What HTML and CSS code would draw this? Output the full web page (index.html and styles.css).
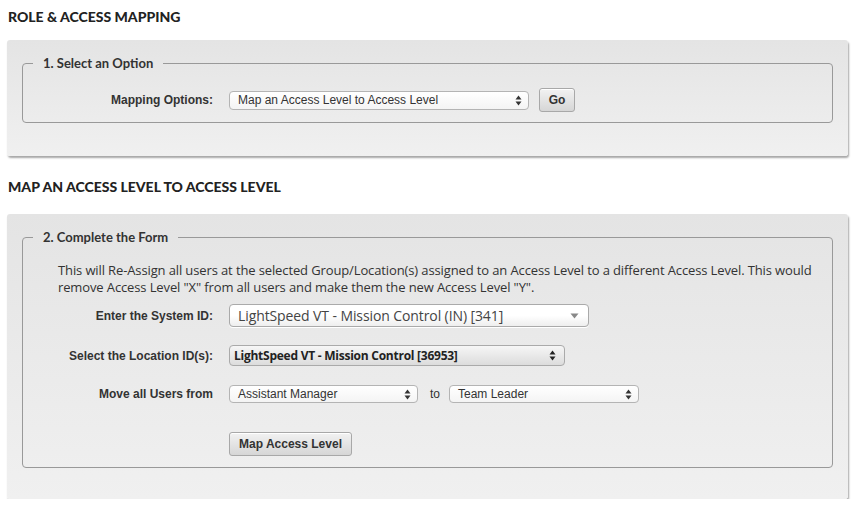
FILE: index.html
```html
<!DOCTYPE html>
<html>
<head>
<meta charset="utf-8">
<link rel="stylesheet" href="styles.css">
</head>
<body>
<div class="page">
  <h2 class="title">ROLE &amp; ACCESS MAPPING</h2>
  <div class="panel panel-1">
    <fieldset class="box box-1">
      <legend>1. Select an Option</legend>
      <div class="inner">
        <div class="row row-map">
          <label class="lbl">Mapping Options:</label>
          <div class="sel sel-map"><span>Map an Access Level to Access Level</span><svg class="updown" width="7" height="11" viewBox="0 0 7 11"><path d="M3.5 0.5L6.5 4.5H0.5Z M3.5 10.5L6.5 6.5H0.5Z" fill="#333"/></svg></div>
          <button class="btn btn-go">Go</button>
        </div>
      </div>
    </fieldset>
  </div>

  <h2 class="title title-2">MAP AN ACCESS LEVEL TO ACCESS LEVEL</h2>
  <div class="panel panel-2">
    <fieldset class="box box-2">
      <legend>2. Complete the Form</legend>
      <div class="inner">
        <p class="desc">This will Re-Assign all users at the selected Group/Location(s) assigned to an Access Level to a different Access Level. This would remove Access Level "X" from all users and make them the new Access Level "Y".</p>
        <div class="row row-sys">
          <label class="lbl">Enter the System ID:</label>
          <div class="sel2"><span>LightSpeed VT - Mission Control (IN) [341]</span><svg class="down" width="9" height="6" viewBox="0 0 9 6"><path d="M0.5 0.5H8.5L4.5 5.5Z" fill="#888"/></svg></div>
        </div>
        <div class="row row-loc">
          <label class="lbl">Select the Location ID(s):</label>
          <div class="sel sel-loc"><span>LightSpeed VT - Mission Control [36953]</span><svg class="updown" width="7" height="11" viewBox="0 0 7 11"><path d="M3.5 0.5L6.5 4.5H0.5Z M3.5 10.5L6.5 6.5H0.5Z" fill="#222"/></svg></div>
        </div>
        <div class="row row-move">
          <label class="lbl">Move all Users from</label>
          <div class="sel sel-from"><span>Assistant Manager</span><svg class="updown" width="7" height="11" viewBox="0 0 7 11"><path d="M3.5 0.5L6.5 4.5H0.5Z M3.5 10.5L6.5 6.5H0.5Z" fill="#333"/></svg></div>
          <span class="to">to</span>
          <div class="sel sel-to"><span>Team Leader</span><svg class="updown" width="7" height="11" viewBox="0 0 7 11"><path d="M3.5 0.5L6.5 4.5H0.5Z M3.5 10.5L6.5 6.5H0.5Z" fill="#333"/></svg></div>
        </div>
        <div class="row row-btn">
          <button class="btn btn-map">Map Access Level</button>
        </div>
      </div>
    </fieldset>
  </div>
</div>
</body>
</html>
```
FILE: styles.css
```css
html, body {
  margin: 0;
  padding: 0;
  background: #fff;
}
.page {
  padding: 7px 10px 0 7px;
  font-family: "Liberation Sans", Arial, sans-serif;
  color: #333;
}
.title {
  margin: 0 0 0 1px;
  font-family: Lato, "Open Sans", sans-serif;
  font-weight: 900;
  font-size: 14px;
  line-height: 20px;
  color: #222;
  height: 33px;
}
.title-2 {
  margin-top: 0;
  height: 37px;
}
.panel {
  background: linear-gradient(#e4e4e4, #f0f0f0);
  border-radius: 3px;
  box-shadow: 1px 2px 2px rgba(0,0,0,0.35);
  padding: 15px 15px 0 15px;
}
.panel-1 {
  height: 101px;
  margin-bottom: 21px;
}
.panel-2 {
  height: 270px;
}
.box {
  margin: 0;
  padding: 0;
  border: 1px solid #999;
  border-radius: 4px;
}
.box legend {
  margin-left: 10px;
  padding: 0 10px;
  font-family: Lato, "Open Sans", sans-serif;
  font-weight: 700;
  font-size: 13px;
  line-height: 16px;
  color: #333;
}
.inner {
  padding: 0 0 0 35px;
}
.box-1 .inner {
  height: 51px;
}
.box-2 .inner {
  height: 205px;
}
.row {
  display: flex;
  align-items: center;
}
.lbl {
  width: 155px;
  margin-right: 16px;
  text-align: right;
  font-weight: 700;
  font-size: 12px;
  color: #333;
  flex: none;
}
.row-map {
  padding-top: 17px;
}
.sel {
  box-sizing: border-box;
  display: flex;
  align-items: center;
  justify-content: space-between;
  border: 1px solid #b4b4b4;
  border-radius: 4px;
  background: linear-gradient(#ffffff, #f4f4f4);
  font-size: 12px;
  color: #333;
  padding: 0 6px 0 8px;
}
.sel-map {
  width: 300px;
  height: 19px;
}
.btn {
  box-sizing: border-box;
  border: 1px solid #a8a8a8;
  border-radius: 3px;
  background: linear-gradient(#f2f2f2, #d6d6d6);
  font-family: "Liberation Sans", Arial, sans-serif;
  font-weight: 700;
  font-size: 12px;
  color: #333;
  padding: 0;
  box-shadow: inset 0 1px 0 #fff;
}
.btn-go {
  margin-left: 10px;
  width: 36px;
  height: 24px;
}
.desc {
  margin: 17px 0 0 0;
  font-family: "Open Sans", sans-serif;
  font-size: 13px;
  line-height: 17px;
  color: #333;
  letter-spacing: -0.12px;
  padding-right: 10px;
}
.row-sys {
  margin-top: 8px;
}
.sel2 {
  box-sizing: border-box;
  width: 360px;
  height: 23px;
  display: flex;
  align-items: center;
  justify-content: space-between;
  border: 1px solid #aaa;
  border-radius: 4px;
  background: linear-gradient(#ffffff 50%, #eeeeee);
  font-family: "Open Sans", sans-serif;
  font-size: 14px;
  letter-spacing: -0.1px;
  color: #444;
  padding: 0 9px 0 8px;
  box-shadow: 0 1px 0 #fff;
}
.row-loc {
  margin-top: 18px;
}
.sel-loc {
  width: 336px;
  height: 21px;
  background: linear-gradient(#f6f6f6, #dcdcdc);
  border-color: #aaa;
  font-family: "Open Sans", sans-serif;
  font-weight: 700;
  font-size: 12px;
  letter-spacing: -0.25px;
  color: #222;
  padding-left: 4px;
  padding-right: 8px;
}
.row-move {
  margin-top: 19px;
}
.sel-from {
  width: 189px;
  height: 18px;
}
.sel-to {
  width: 190px;
  height: 18px;
}
.to {
  margin: 0 9px 0 12px;
  font-size: 12px;
  color: #333;
}
.row-btn {
  margin-top: 29px;
  padding-left: 171px;
}
.btn-map {
  width: 123px;
  height: 24px;
}
```
